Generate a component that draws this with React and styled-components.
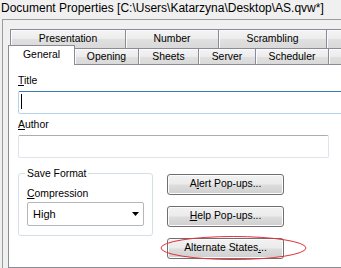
import React from 'react';
import styled, { createGlobalStyle } from 'styled-components';

const Global = createGlobalStyle`
	body {
		margin: 0;
		background: #f0f0f0;
	}
`

const Window = styled.div`
	width: 341px;
	height: 268px;
	overflow: hidden;
	background: #f0f0f0;
	font-family: "Liberation Sans", Arial, sans-serif;
	font-size: 10.4px;
	color: #000;
	display: flex;
	flex-direction: column;
`

const TitleBar = styled.div`
	height: 19px;
	padding-left: 1px;
	font-size: 12px;
	line-height: 16px;
	white-space: nowrap;
	flex-shrink: 0;
`

const Frame = styled.div`
	flex: 1;
	width: 420px;
	margin-left: 2px;
	border-top: 1px solid #9c9c9c;
	border-left: 1px solid #9c9c9c;
	padding-top: 9px;
	display: flex;
	flex-direction: column;
`

const TabRow = styled.div`
	display: flex;
	align-items: flex-end;
	margin-left: ${p => p.$indent}px;
	margin-bottom: ${p => p.$overlap}px;
	position: relative;
`

const Tab = styled.div`
	box-sizing: border-box;
	width: ${p => p.$w}px;
	height: ${p => p.$h}px;
	margin-right: -1px;
	border: 1px solid #898c95;
	border-bottom: none;
	background: linear-gradient(#f4f4f4, #ececec 50%, #e0e0e0 51%, #d9d9d9);
	box-shadow: inset 1px 1px 0 #fbfbfb;
	text-align: center;
	line-height: 13px;
	padding-top: ${p => p.$pt}px;
	white-space: nowrap;
	flex-shrink: 0;
`

const ActiveTab = styled(Tab)`
	background: #fff;
	box-shadow: none;
	margin-bottom: -1px;
	position: relative;
	z-index: 2;
`

const Panel = styled.div`
	flex: 1;
	margin-left: 5px;
	border: 1px solid #898c95;
	background: #fff;
	padding: 9px 0 0 9px;
`

const Label = styled.div`
	line-height: 13px;
	margin-top: ${p => p.$mt || 0}px;
`

const Key = styled.span`
	text-decoration: underline;
	text-underline-offset: 1px;
`

const TextBox = styled.div`
	box-sizing: border-box;
	width: ${p => p.$w}px;
	height: 23px;
	margin-top: 4px;
	border: 1px solid ${p => (p.$focus ? '#b4d4ee' : '#e2e3ea')};
	border-top-color: ${p => (p.$focus ? '#3d7bad' : '#abadb3')};
	border-radius: 2px;
	background: #fff;
	padding: 2px 0 0 2px;
`

const Caret = styled.div`
	width: 1px;
	height: 15px;
	background: #000;
`

const Lower = styled.div`
	display: flex;
	gap: 14px;
	align-items: flex-start;
	margin-top: 9px;
`

const Group = styled.fieldset`
	box-sizing: border-box;
	width: 135px;
	margin: 0;
	padding: 7px 8px 9px;
	border: 1px solid #d5dfe5;
	border-radius: 3px;
`

const Legend = styled.legend`
	padding: 0 2px;
	margin-left: -2px;
	line-height: 13px;
`

const Combo = styled.div`
	box-sizing: border-box;
	width: 117px;
	height: 24px;
	margin-top: 2px;
	border: 1px solid #b6b6b6;
	border-radius: 2px;
	background: #fff;
	display: flex;
	align-items: center;
	justify-content: space-between;
	padding: 0 4px 0 5px;
	font-size: 11px;
`

const Buttons = styled.div`
	display: flex;
	flex-direction: column;
	gap: 11px;
	padding-top: 7px;
`

const Button = styled.div`
	box-sizing: border-box;
	width: 117px;
	height: 21px;
	border: 1px solid #707070;
	border-radius: 3px;
	background: linear-gradient(#f2f2f2, #ebebeb 48%, #dddddd 52%, #cfcfcf);
	box-shadow: inset 0 0 0 1px #fcfcfc;
	text-align: center;
	line-height: 18px;
	white-space: nowrap;
`

const Marked = styled.div`
	position: relative;
`

const Ring = styled.svg`
	position: absolute;
	left: -7px;
	top: -2px;
	overflow: visible;
	pointer-events: none;
`

const App = () => {
	return (
		<Window>
			<Global />
			<TitleBar>Document Properties [C:\Users\Katarzyna\Desktop\AS.qvw*]</TitleBar>
			<Frame>
				<TabRow $indent={7} $overlap={-3}>
					<Tab $w={116} $h={19} $pt={2}>Presentation</Tab>
					<Tab $w={94} $h={19} $pt={2}>Number</Tab>
					<Tab $w={109} $h={19} $pt={2}>Scrambling</Tab>
					<Tab $w={100} $h={19} $pt={2}></Tab>
				</TabRow>
				<TabRow $indent={5} $overlap={0}>
					<ActiveTab $w={67} $h={20} $pt={2}>General</ActiveTab>
					<Tab $w={65} $h={16} $pt={1}>Opening</Tab>
					<Tab $w={61} $h={16} $pt={1}>Sheets</Tab>
					<Tab $w={58} $h={16} $pt={1}>Server</Tab>
					<Tab $w={74} $h={16} $pt={1}>Scheduler</Tab>
					<Tab $w={100} $h={16} $pt={1}></Tab>
				</TabRow>
				<Panel>
					<Label><Key>T</Key>itle</Label>
					<TextBox $w={360} $focus>
						<Caret />
					</TextBox>
					<Label $mt={4}><Key>A</Key>uthor</Label>
					<TextBox $w={311} />
					<Lower>
						<Group>
							<Legend>Save Format</Legend>
							<Label><Key>C</Key>ompression</Label>
							<Combo>
								<span>High</span>
								<svg width="7" height="4" viewBox="0 0 7 4">
									<path d="M0 0h7L3.5 4z" fill="#000" />
								</svg>
							</Combo>
						</Group>
						<Buttons>
							<Button>A<Key>l</Key>ert Pop-ups...</Button>
							<Button><Key>H</Key>elp Pop-ups...</Button>
							<Marked>
								<Button>Alternate States<Key>.</Key>..</Button>
								<Ring width="147" height="24">
									<ellipse cx="73.5" cy="12" rx="72.5" ry="11.5" fill="none" stroke="#e0303a" strokeWidth="1" />
								</Ring>
							</Marked>
						</Buttons>
					</Lower>
				</Panel>
			</Frame>
		</Window>
	)
}

export default App;
